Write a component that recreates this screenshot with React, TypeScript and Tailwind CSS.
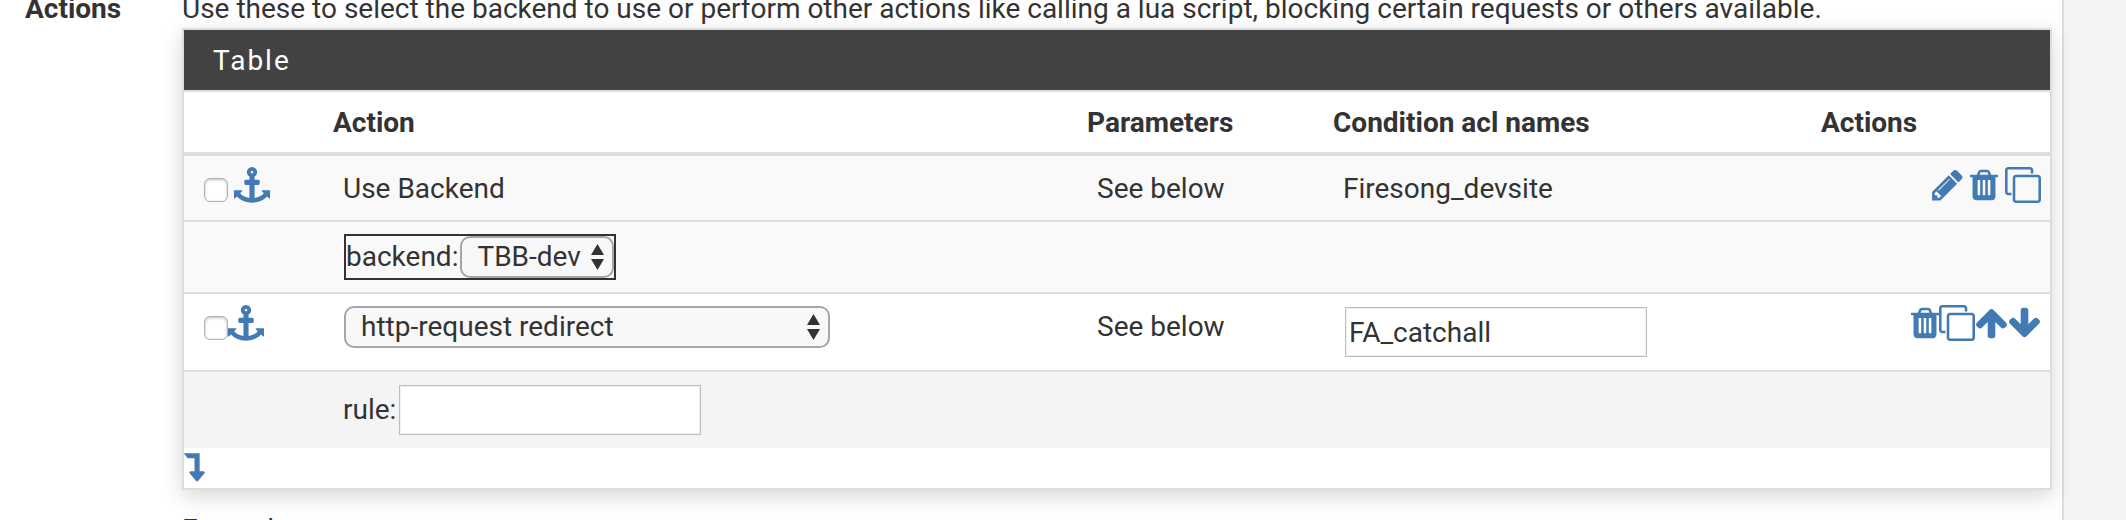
import { useState, type ReactNode } from 'react'
import { clsx } from 'clsx'

const ICONS = {
  anchor: {
    viewBox: '0 0 1792 1792',
    size: 'w-9',
    path: 'M960 256q0-26-19-45t-45-19-45 19-19 45 19 45 45 19 45-19 19-45zm832 928v352q0 22-20 30-8 2-12 2-12 0-23-9l-93-93q-119 143-318.500 226.500t-429.500 83.500-429.500-83.500-318.500-226.500l-93 93q-9 9-23 9-4 0-12-2-20-8-20-30v-352q0-14 9-23t23-9h352q22 0 30 20 8 19-7 35l-100 100q67 91 189.500 153.500t271.500 82.500v-647h-192q-26 0-45-19t-19-45v-128q0-26 19-45t45-19h192v-163q-58-34-93-92.500t-35-128.500q0-106 75-181t181-75 181 75 75 181q0 70-35 128.500t-93 92.500v163h192q26 0 45 19t19 45v128q0 26-19 45t-45 19h-192v647q149-20 271.500-82.500t189.500-153.500l-100-100q-15-16-7-35 8-20 30-20h352q14 0 23 9t9 23z',
  },
  pencil: {
    viewBox: '128 0 1536 1792',
    size: 'w-[31px]',
    path: 'M491 1536l91-91-235-235-91 91v107h128v128h107zm523-928q0-22-22-22-10 0-17 7l-542 542q-7 7-7 17 0 22 22 22 10 0 17-7l542-542q7-7 7-17zm-54-192l416 416-832 832h-416v-416zm683 96q0 53-37 90l-166 166-416-416 166-165q36-38 90-38 53 0 91 38l235 234q37 39 37 91z',
  },
  trash: {
    viewBox: '192 0 1408 1792',
    size: 'w-7',
    path: 'M704 1376v-704q0-14-9-23t-23-9h-64q-14 0-23 9t-9 23v704q0 14 9 23t23 9h64q14 0 23-9t9-23zm256 0v-704q0-14-9-23t-23-9h-64q-14 0-23 9t-9 23v704q0 14 9 23t23 9h64q14 0 23-9t9-23zm256 0v-704q0-14-9-23t-23-9h-64q-14 0-23 9t-9 23v704q0 14 9 23t23 9h64q14 0 23-9t9-23zm-544-992h448l-48-117q-7-9-17-11h-317q-10 2-17 11zm928 32v64q0 14-9 23t-23 9h-96v948q0 83-47 143.500t-113 60.500h-832q-66 0-113-58.500t-47-141.500v-952h-96q-14 0-23-9t-9-23v-64q0-14 9-23t23-9h309l70-167q15-37 54-63t79-26h320q40 0 79 26t54 63l70 167h309q14 0 23 9t9 23z',
  },
  clone: {
    viewBox: '0 0 1792 1792',
    size: 'w-9',
    path: 'M1664 1632v-1088q0-13-9.500-22.500t-22.500-9.500h-1088q-13 0-22.500 9.500t-9.500 22.500v1088q0 13 9.500 22.500t22.500 9.500h1088q13 0 22.500-9.500t9.500-22.500zm128-1088v1088q0 66-47 113t-113 47h-1088q-66 0-113-47t-47-113v-1088q0-66 47-113t113-47h1088q66 0 113 47t47 113zm-384-384v160h-128v-160q0-13-9.500-22.500t-22.500-9.500h-1088q-13 0-22.500 9.500t-9.500 22.500v1088q0 13 9.500 22.500t22.500 9.500h160v128h-160q-66 0-113-47t-47-113v-1088q0-66 47-113t113-47h1088q66 0 113 47t47 113z',
  },
  arrowUp: {
    viewBox: '64 0 1664 1792',
    size: 'w-[33px]',
    path: 'M1675 971q0 51-37 90l-75 75q-38 38-91 38-54 0-90-38l-294-293v704q0 52-37.500 84.500t-90.500 32.500h-128q-53 0-90.500-32.500t-37.500-84.500v-704l-294 293q-36 38-90 38t-90-38l-75-75q-38-38-38-90 0-53 38-91l651-651q35-37 90-37 54 0 91 37l651 651q37 39 37 91z',
  },
  arrowDown: {
    viewBox: '64 0 1664 1792',
    size: 'w-[33px]',
    path: 'M1675 832q0 53-37 90l-651 652q-39 37-91 37-53 0-90-37l-651-652q-38-36-38-90 0-53 38-91l74-75q39-37 91-37 53 0 90 37l294 294v-704q0-52 38-90t90-38h128q52 0 90 38t38 90v704l294-294q37-37 90-37 52 0 91 37l75 75q37 39 37 91z',
  },
  levelDown: {
    viewBox: '0 0 1024 1792',
    size: 'w-[21px]',
    path: 'M32 256h704q13 0 22.5 9.500t9.500 23.500v863h192q40 0 58 37 17 37-9 68l-320 384q-18 22-49 22t-49-22l-320-384q-26-31-9-68 18-37 58-37h192v-640h-320q-14 0-25-11l-160-192q-13-14-4-34 9-19 29-19z',
  },
} as const

interface IconButtonProps {
  icon: keyof typeof ICONS
  label: string
  onClick?: () => void
}

function IconButton({ icon, label, onClick }: IconButtonProps) {
  const { viewBox, size, path } = ICONS[icon]
  return (
    <button
      type="button"
      aria-label={label}
      title={label}
      onClick={onClick}
      className="block shrink-0 cursor-pointer text-[#427ab3]"
    >
      <svg viewBox={viewBox} className={clsx('block h-9', size)} fill="currentColor" aria-hidden="true">
        <path d={path} />
      </svg>
    </button>
  )
}

interface SelectProps {
  id: string
  label?: string
  options: readonly string[]
  className: string
}

function Select({ id, label, options, className }: SelectProps) {
  return (
    <span className={clsx('relative block', className)}>
      <select
        id={id}
        aria-label={label}
        className="block h-[42px] w-full appearance-none rounded-[10px] border-2 border-[#a6a6a6] bg-[#f8f8f8] pl-[15px] leading-[38px]"
      >
        {options.map((option) => (
          <option key={option}>{option}</option>
        ))}
      </select>
      <svg
        viewBox="0 0 13 26"
        className="pointer-events-none absolute top-2 right-[10px] h-[26px] w-[13px]"
        fill="#333"
        aria-hidden="true"
      >
        <path d="M6.500 0L13 11H0zM0 15h13L6.500 26z" />
      </svg>
    </span>
  )
}

function RowCheckbox({ label }: { label: string }) {
  return (
    <input
      type="checkbox"
      aria-label={label}
      className="mt-[11px] block size-6 shrink-0 appearance-none rounded-md border border-[#b0b0b0] bg-white shadow-[inset_0_1px_3px_rgba(0,0,0,0.25)] checked:bg-[#427ab3]"
    />
  )
}

interface RowProps {
  className: string
  divided?: boolean
  children: ReactNode
}

function Row({ className, divided = true, children }: RowProps) {
  return (
    <tr className={clsx('align-top', divided && '[&>td]:border-t-2 [&>td]:border-[#ddd]', className)}>{children}</tr>
  )
}

const BACKENDS = ['TBB-dev', 'TBB-prod'] as const
const ACTION_TYPES = ['http-request redirect', 'Use Backend', 'http-request deny'] as const

const inputClassName =
  'block h-[50px] w-[302px] border border-[#bdbdbd] bg-white px-[3px] shadow-[inset_0_0_0_1px_#f0f0f0]'

export default function App() {
  const [acl, setAcl] = useState('FA_catchall')
  const [rule, setRule] = useState('')

  return (
    <div className="flex h-screen overflow-hidden bg-[#f4f4f4] font-['Roboto',sans-serif] text-[28px] leading-[38px] text-[#333]">
      <main className="mr-[62px] flex min-w-0 flex-1 border-r-2 border-[#ddd] bg-white pr-[10px]">
        <h2 className="-mt-[10px] w-[182px] shrink-0 pl-[25px] font-bold">Actions</h2>

        <div className="min-w-0 flex-1">
          <p className="-mt-[10px] whitespace-nowrap">
            Use these to select the backend to use or perform other actions like calling a lua script, blocking certain
            requests or others available.
          </p>

          <section className="border-2 border-[#ddd] bg-white shadow-[0_6px_20px_rgba(0,0,0,0.16)]">
            <h3 className="flex h-[60px] items-center bg-[#424242] pt-0.5 pl-[29px] tracking-[2px] text-white">
              Table
            </h3>

            <table className="w-full table-fixed border-separate border-spacing-0">
              <colgroup>
                <col className="w-[139px]" />
                <col />
                <col className="w-[246px]" />
                <col className="w-[487px]" />
                <col className="w-[240px]" />
              </colgroup>
              <thead>
                <tr className="h-[66px] text-left *:border-t-2 *:border-b-4 *:border-[#ddd]">
                  <td />
                  <th className="pt-0.5 pl-[10px]">Action</th>
                  <th className="pt-0.5 pl-[10px]">Parameters</th>
                  <th className="pt-0.5 pl-[10px]">Condition acl names</th>
                  <th className="pt-0.5 pl-[11px]">Actions</th>
                </tr>
              </thead>
              <tbody>
                <Row className="h-16 bg-[#f9f9f9]" divided={false}>
                  <td className="pt-[11px] pl-5">
                    <div className="flex gap-[6px]">
                      <RowCheckbox label="Select Use Backend" />
                      <IconButton icon="anchor" label="Move checked entries here" />
                    </div>
                  </td>
                  <td className="pt-[14px] pl-5">Use Backend</td>
                  <td className="pt-[14px] pl-5">See below</td>
                  <td className="pt-[14px] pl-5">Firesong_devsite</td>
                  <td className="pt-[11px] pr-[9px]">
                    <div className="flex justify-end gap-[7px]">
                      <IconButton icon="pencil" label="Edit" />
                      <IconButton icon="trash" label="Delete" />
                      <IconButton icon="clone" label="Duplicate" />
                    </div>
                  </td>
                </Row>
                <Row className="h-[72px] bg-[#f9f9f9]">
                  <td />
                  <td colSpan={4} className="pt-3 pl-[21px]">
                    <div className="flex w-fit items-center border-2 border-[#333]">
                      <label htmlFor="backend" className="pr-0.5">
                        backend:
                      </label>
                      <Select id="backend" options={BACKENDS} className="w-[154px]" />
                    </div>
                  </td>
                </Row>
                <Row className="h-[78px] bg-white">
                  <td className="pt-[11px] pl-5">
                    <div className="flex">
                      <RowCheckbox label="Select http-request redirect" />
                      <IconButton icon="anchor" label="Move checked entries here" />
                    </div>
                  </td>
                  <td className="pt-3 pl-[21px]">
                    <Select id="action" label="Action" options={ACTION_TYPES} className="w-[486px]" />
                  </td>
                  <td className="pt-[14px] pl-5">See below</td>
                  <td className="pt-[13px] pl-[22px]">
                    <input
                      type="text"
                      aria-label="Condition acl names"
                      value={acl}
                      onChange={(event) => setAcl(event.target.value)}
                      className={inputClassName}
                    />
                  </td>
                  <td className="pt-[11px] pr-[9px]">
                    <div className="flex justify-end">
                      <IconButton icon="trash" label="Delete" />
                      <IconButton icon="clone" label="Duplicate" />
                      <IconButton icon="arrowUp" label="Move up" />
                      <IconButton icon="arrowDown" label="Move down" />
                    </div>
                  </td>
                </Row>
                <Row className="h-[78px] bg-[#f4f4f4]">
                  <td />
                  <td colSpan={4} className="pt-[13px] pl-5">
                    <div className="flex items-center gap-[3px]">
                      <label htmlFor="rule">rule:</label>
                      <input
                        id="rule"
                        type="text"
                        value={rule}
                        onChange={(event) => setRule(event.target.value)}
                        className={inputClassName}
                      />
                    </div>
                  </td>
                </Row>
              </tbody>
            </table>

            <div className="h-10">
              <IconButton icon="levelDown" label="Add entry" />
            </div>
          </section>

          <p className="mt-[21px]">Example:</p>
        </div>
      </main>
    </div>
  )
}
